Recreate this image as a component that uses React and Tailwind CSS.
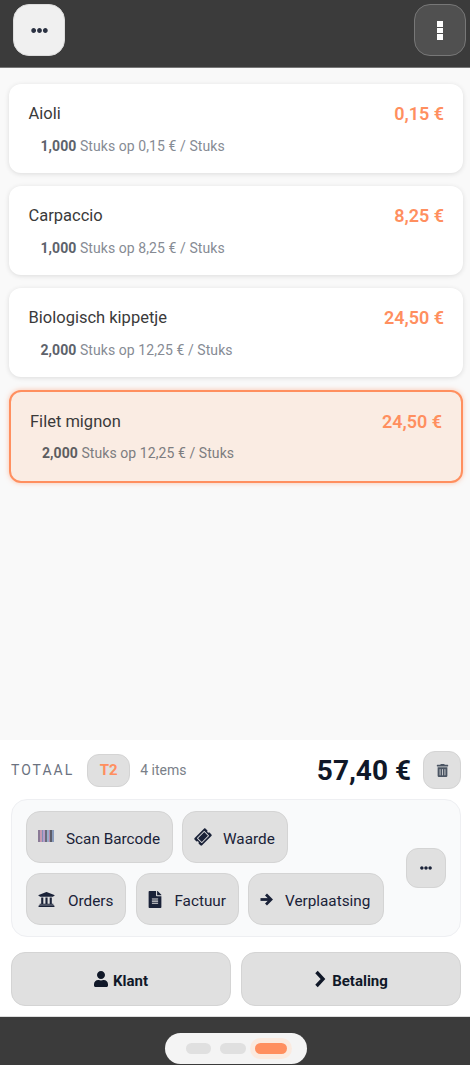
import React from "react";
import {
  FaEllipsisH,
  FaTrashAlt,
  FaTicketAlt,
  FaUniversity,
  FaFileAlt,
  FaUser,
} from "react-icons/fa";

const lines = [
  { name: "Aioli", total: "0,15 €", qty: "1,000", unit: "0,15" },
  { name: "Carpaccio", total: "8,25 €", qty: "1,000", unit: "8,25" },
  { name: "Biologisch kippetje", total: "24,50 €", qty: "2,000", unit: "12,25" },
];

const barColors = ["#8a7a96", "#c79ab0", "#7f8fb8", "#b79cc8", "#6a6a78", "#9aaccc", "#b88aa8", "#5c5c68", "#8a9cbc"];

const BarcodeIcon = () => (
  <div className="mb-[3px] flex h-[12px] w-[16px] items-stretch">
    {barColors.map((c, i) => (
      <div key={i} className="flex-1" style={{ backgroundColor: c }}></div>
    ))}
  </div>
);

const ArrowIcon = () => (
  <svg width="13" height="13" viewBox="0 0 13 13" fill="none" stroke="currentColor" strokeWidth="2.8">
    <path d="M0.5 6.5H11" />
    <path d="M6 1.5L11 6.5L6 11.5" />
  </svg>
);

const ChevronIcon = () => (
  <svg width="12" height="18" viewBox="0 0 12 18" fill="none" stroke="currentColor" strokeWidth="3.4">
    <path d="M2.5 2L9 9L2.5 16" />
  </svg>
);

const ActionButton = ({ icon, label, className }) => (
  <button className={`flex h-[52px] items-center rounded-[14px] border border-[#d4d4d4] bg-[#e0e0e0] pr-[12px] text-[15.3px] text-[#1a2238] ${className}`}>
    {icon}
    <span className="mt-[4px]">{label}</span>
  </button>
);

const OrderLine = ({ line }) => (
  <div className="flex h-[89px] flex-col rounded-xl bg-white pl-[19.5px] pr-[19px] pt-[19px] shadow-[0_1px_5px_rgba(0,0,0,0.12)]">
    <div className="flex items-center justify-between">
      <span className="text-[16.5px] leading-[22px] text-[#3a3a3a]">{line.name}</span>
      <span className="text-[18px] font-semibold leading-[20px] text-[#ff8f5f]">{line.total}</span>
    </div>
    <div className="mt-[11px] pl-3 text-[14px] leading-[20px] tracking-[0.07px] text-[#868b94]">
      <span className="font-bold text-[#5d626b]">{line.qty}</span> Stuks op {line.unit} € / Stuks
    </div>
  </div>
);

export default function App() {
  return (
    <div className="flex h-[1065px] w-[470px] flex-col overflow-hidden bg-white font-['Roboto',sans-serif]">
      {/* Top bar */}
      <header className="flex h-[68px] shrink-0 items-start justify-between border-b border-[#777] bg-[#3b3b3b] pl-[13px] pr-1 pt-1">
        <button className="flex h-[52px] w-[52px] items-center justify-center rounded-[16px] border border-[#ddd] bg-[#f0f0f0] text-[#2b3242]">
          <FaEllipsisH size={17} />
        </button>
        <button className="flex h-[52px] w-[52px] items-center justify-center rounded-[16px] border border-[#777] bg-[#505050]">
          <span className="flex flex-col gap-[1px]">
            <span className="h-[6px] w-[6px] bg-white"></span>
            <span className="h-[5px] w-[6px] bg-white"></span>
            <span className="h-[6px] w-[6px] bg-white"></span>
          </span>
        </button>
      </header>

      {/* Order lines */}
      <main className="flex flex-1 flex-col gap-[13px] bg-[#f9f9f9] pl-[9px] pr-[7px] pt-4">
        {lines.map((line) => (
          <OrderLine key={line.name} line={line} />
        ))}
        <div className="flex h-[93px] flex-col rounded-xl border-2 border-[#ff8f5f] bg-[#faece3] px-[19px] pt-[19px] shadow-[0_0_5px_rgba(255,143,95,0.5)]">
          <div className="flex items-center justify-between">
            <span className="text-[16.5px] leading-[22px] text-[#3a3a3a]">Filet mignon</span>
            <span className="text-[18px] font-semibold leading-[20px] text-[#ff8f5f]">24,50 €</span>
          </div>
          <div className="mt-[10px] pl-3 text-[14px] leading-[20px] tracking-[0.07px] text-[#7d7d80]">
            <span className="font-bold text-[#5d5d60]">2,000</span> Stuks op 12,25 € / Stuks
          </div>
        </div>
      </main>

      {/* Totals and actions */}
      <section className="flex h-[276px] shrink-0 flex-col bg-white pl-[11px] pr-[9px] pt-[11px]">
        <div className="flex h-[38px] items-center">
          <span className="text-[14px] tracking-[2px] text-[#6b7280]">TOTAAL</span>
          <span className="ml-[13px] flex h-[33px] w-[43px] items-center justify-center rounded-[12px] border border-[#d4d4d4] bg-[#e0e0e0] text-[15px] font-bold text-[#ff8f5f]">
            T2
          </span>
          <span className="ml-[10px] text-[14px] text-[#7a7f88]">4 items</span>
          <span className="ml-auto mt-[2px] text-[28px] font-bold text-[#101828]">57,40 €</span>
          <button className="ml-3 flex h-[38px] w-[38px] items-center justify-center rounded-[12px] border border-[#d4d4d4] bg-[#e0e0e0] text-[#4b5563]">
            <FaTrashAlt size={13} />
          </button>
        </div>

        <div className="mt-[10px] flex h-[138px] items-center rounded-[16px] border border-[#eeeff2] bg-[#f9fafb] pl-[14px] pr-[14px]">
          <div className="flex flex-1 flex-col gap-[10px]">
            <div className="flex gap-[9px]">
              <ActionButton className="gap-3 pl-[11px]" icon={<BarcodeIcon />} label="Scan Barcode" />
              <ActionButton className="gap-3 pl-3" icon={<FaTicketAlt size={14} className="w-4 -rotate-45" />} label="Waarde" />
            </div>
            <div className="flex gap-[9px]">
              <ActionButton className="gap-[13px] pl-[11px]" icon={<FaUniversity size={17} />} label="Orders" />
              <ActionButton className="ml-px gap-3 pl-[11px]" icon={<FaFileAlt size={17} className="w-[14px]" />} label="Factuur" />
              <ActionButton className="w-[136px] gap-3 pl-[11px]" icon={<ArrowIcon />} label="Verplaatsing" />
            </div>
          </div>
          <button className="flex h-10 w-10 items-center justify-center rounded-[12px] border border-[#d4d4d4] bg-[#e0e0e0] text-[#1a2238]">
            <FaEllipsisH size={12} />
          </button>
        </div>

        <div className="mt-[15px] flex gap-[10px]">
          <button className="flex h-[54px] flex-1 items-center justify-center gap-[5px] rounded-[14px] border border-[#d4d4d4] bg-[#e0e0e0] text-[15px] font-bold text-[#101828]">
            <FaUser size={16} className="w-[14px]" />
            <span className="mt-[4px]">Klant</span>
          </button>
          <button className="flex h-[54px] flex-1 items-center justify-center gap-[6px] rounded-[14px] border border-[#d4d4d4] bg-[#e0e0e0] text-[15px] font-bold text-[#101828]">
            <ChevronIcon />
            <span className="mt-[4px]">Betaling</span>
          </button>
        </div>
      </section>

      {/* Bottom pager */}
      <footer className="flex h-[49px] shrink-0 justify-center border-t border-[#ddd] bg-[#3b3b3b] pl-[2px] pt-4">
        <div className="flex h-[31px] w-[142px] items-center justify-center gap-[9px] rounded-full bg-[#f4f4f4]">
          <span className="h-[11px] w-[25px] rounded-full bg-[#e0e0e0]"></span>
          <span className="h-[11px] w-[26px] rounded-full bg-[#e0e0e0]"></span>
          <span className="h-[11px] w-[32px] rounded-full bg-[#ff8f5f] shadow-[0_0_0_5px_#fbeadf]"></span>
        </div>
      </footer>
    </div>
  );
}
